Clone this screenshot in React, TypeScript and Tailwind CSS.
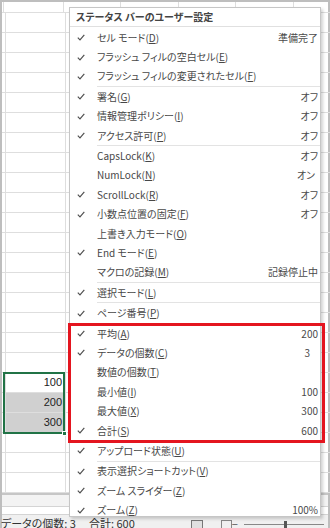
import React from "react";

type Item = { pre: string; k: string; c: boolean; v?: string; sep?: boolean; vcls?: string };

const items: Item[] = [
  { pre: "セル モード(", k: "D", c: true, v: "準備完了" },
  { pre: "フラッシュ フィルの空白セル(", k: "E", c: true },
  { pre: "フラッシュ フィルの変更されたセル(", k: "F", c: true, sep: true },
  { pre: "署名(", k: "G", c: true, v: "オフ" },
  { pre: "情報管理ポリシー(", k: "I", c: true, v: "オフ" },
  { pre: "アクセス許可(", k: "P", c: true, v: "オフ", sep: true },
  { pre: "CapsLock(", k: "K", c: false, v: "オフ" },
  { pre: "NumLock(", k: "N", c: false, v: "オン", vcls: "mr-[3px]" },
  { pre: "ScrollLock(", k: "R", c: true, v: "オフ" },
  { pre: "小数点位置の固定(", k: "F", c: true, v: "オフ" },
  { pre: "上書き入力モード(", k: "O", c: false },
  { pre: "End モード(", k: "E", c: true },
  { pre: "マクロの記録(", k: "M", c: false, v: "記録停止中", sep: true },
  { pre: "選択モード(", k: "L", c: true, sep: true },
  { pre: "ページ番号(", k: "P", c: true, sep: true },
  { pre: "平均(", k: "A", c: true, v: "200" },
  { pre: "データの個数(", k: "C", c: true, v: "3", vcls: "mr-[8px]" },
  { pre: "数値の個数(", k: "T", c: false },
  { pre: "最小値(", k: "I", c: false, v: "100" },
  { pre: "最大値(", k: "X", c: false, v: "300" },
  { pre: "合計(", k: "S", c: true, v: "600", sep: true },
  { pre: "アップロード状態(", k: "U", c: true, sep: true },
  { pre: "表示選択ショートカット(", k: "V", c: true },
  { pre: "ズーム スライダー(", k: "Z", c: true },
  { pre: "ズーム(", k: "Z", c: true, v: "100%" },
];

function Check() {
  return (
    <svg width="8" height="7" viewBox="0 0 8 7" className="block">
      <path d="M0.8 3.6 L3 5.9 L7.3 0.9" fill="none" stroke="#505050" strokeWidth="1.2" />
    </svg>
  );
}

const colWidths = [2, 60, 57, 58, 57, 58, 60];

export default function App() {
  const rows = Array.from({ length: 24 }, (_, i) => i);
  return (
    <div className="relative w-[330px] h-[528px] overflow-hidden bg-[#bebebe] pt-[2px] px-[2px] font-['Noto_Sans_CJK_JP',sans-serif]">
      <div className="flex flex-col h-full bg-white">
        {/* grid */}
        <div className="flex flex-col shrink-0">
          <div className="flex shrink-0 h-[11px]">
            {colWidths.map((w, i) => (
              <div key={i} className="shrink-0 border-r border-b border-[#dedede]" style={{ width: w }} />
            ))}
          </div>
          {rows.map((r) => {
            const val = r === 18 ? "100" : r === 19 ? "200" : r === 20 ? "300" : null;
            const gray = r === 19 || r === 20;
            return (
              <div key={r} className="flex shrink-0 h-[20px]">
                {colWidths.map((w, i) => (
                  <div
                    key={i}
                    className={`shrink-0 border-r border-b border-[#dedede] flex items-center justify-end pr-[3px] text-[11px] text-[#222] font-['Liberation_Sans',sans-serif] ${
                      i === 1 && gray ? "bg-[#d0d0d0]" : ""
                    }`}
                    style={{ width: w }}
                  >
                    {i === 1 && val}
                  </div>
                ))}
              </div>
            );
          })}
        </div>
        {/* scroll / tabs area */}
        <div className="h-[2px] shrink-0 bg-[#c6c6c6]" />
        <div className="h-[12px] shrink-0 bg-[#f3f3f3] border-b border-[#d4d4d4]" />
        <div className="h-[8px] shrink-0 bg-white border-b border-[#d4d4d4]" />
        {/* status bar */}
        <div className="flex items-start shrink-0 h-[20px] bg-[#f0f0f0] text-[11px] text-[#333] leading-none pt-[3px] whitespace-nowrap [font-feature-settings:'palt']">
          <span className="shrink-0 ml-[-1px]">データの個数: 3</span>
          <span className="shrink-0 ml-[13px]">合計: 600</span>
          <div className="shrink-0 ml-[56px] mt-[2px] w-[12px] h-[9px] border border-[#777] bg-[#e0e0e0]" />
          <div className="shrink-0 ml-[18px] mt-[2px] w-[11px] h-[9px] border border-[#888]" />
          <div className="ml-auto shrink-0 flex items-center gap-[6px] pt-[1px] pr-[2px]">
            <span className="text-[#555]">−</span>
            <div className="relative w-[80px] h-px bg-[#888]">
              <div className="absolute left-[40px] top-[-3px] w-[3px] h-[7px] bg-[#555]" />
            </div>
            <span className="text-[#555]">+</span>
          </div>
        </div>
      </div>

      {/* selection border */}
      <div className="absolute left-[3px] top-[372px] w-[62px] h-[62px] border-2 border-[#217346] pointer-events-none">
        <div className="absolute right-[-4px] bottom-[-4px] w-[5px] h-[5px] bg-[#217346] border border-white" />
      </div>

      {/* context menu */}
      <div className="absolute left-[69px] top-[7px] w-[252px] h-[510px] overflow-hidden bg-white border border-[#c6c6c6] shadow-[2px_2px_3px_rgba(0,0,0,0.18)] text-[10px] text-[#474747] [font-feature-settings:'palt'] leading-none">
        <div className="h-[18px] flex items-center pl-[6px] font-bold text-[#444] border-b border-[#e0e0e0] box-content">
          ステータス バーのユーザー設定
        </div>
        <div className="pt-px">
          {items.map((it, idx) => (
            <React.Fragment key={idx}>
              <div className="flex items-center h-[19.4px]">
                <div className="w-[27px] shrink-0 pl-[7px]">{it.c && <Check />}</div>
                <span className="whitespace-nowrap">
                  {it.pre}
                  <span className="underline underline-offset-[1px]">{it.k}</span>)
                </span>
                {it.v && (
                  <span className={`ml-auto pr-[2px] whitespace-nowrap text-[#4a4a4a] ${it.vcls ?? ""}`}>{it.v}</span>
                )}
              </div>
              {it.sep && <div className="ml-[27px] h-px bg-[#e3e3e3]" />}
            </React.Fragment>
          ))}
        </div>
      </div>

      {/* red highlight box */}
      <div className="absolute left-[68px] top-[323px] w-[257px] h-[120px] border-[3px] border-[#e4151f] pointer-events-none" />
    </div>
  );
}
